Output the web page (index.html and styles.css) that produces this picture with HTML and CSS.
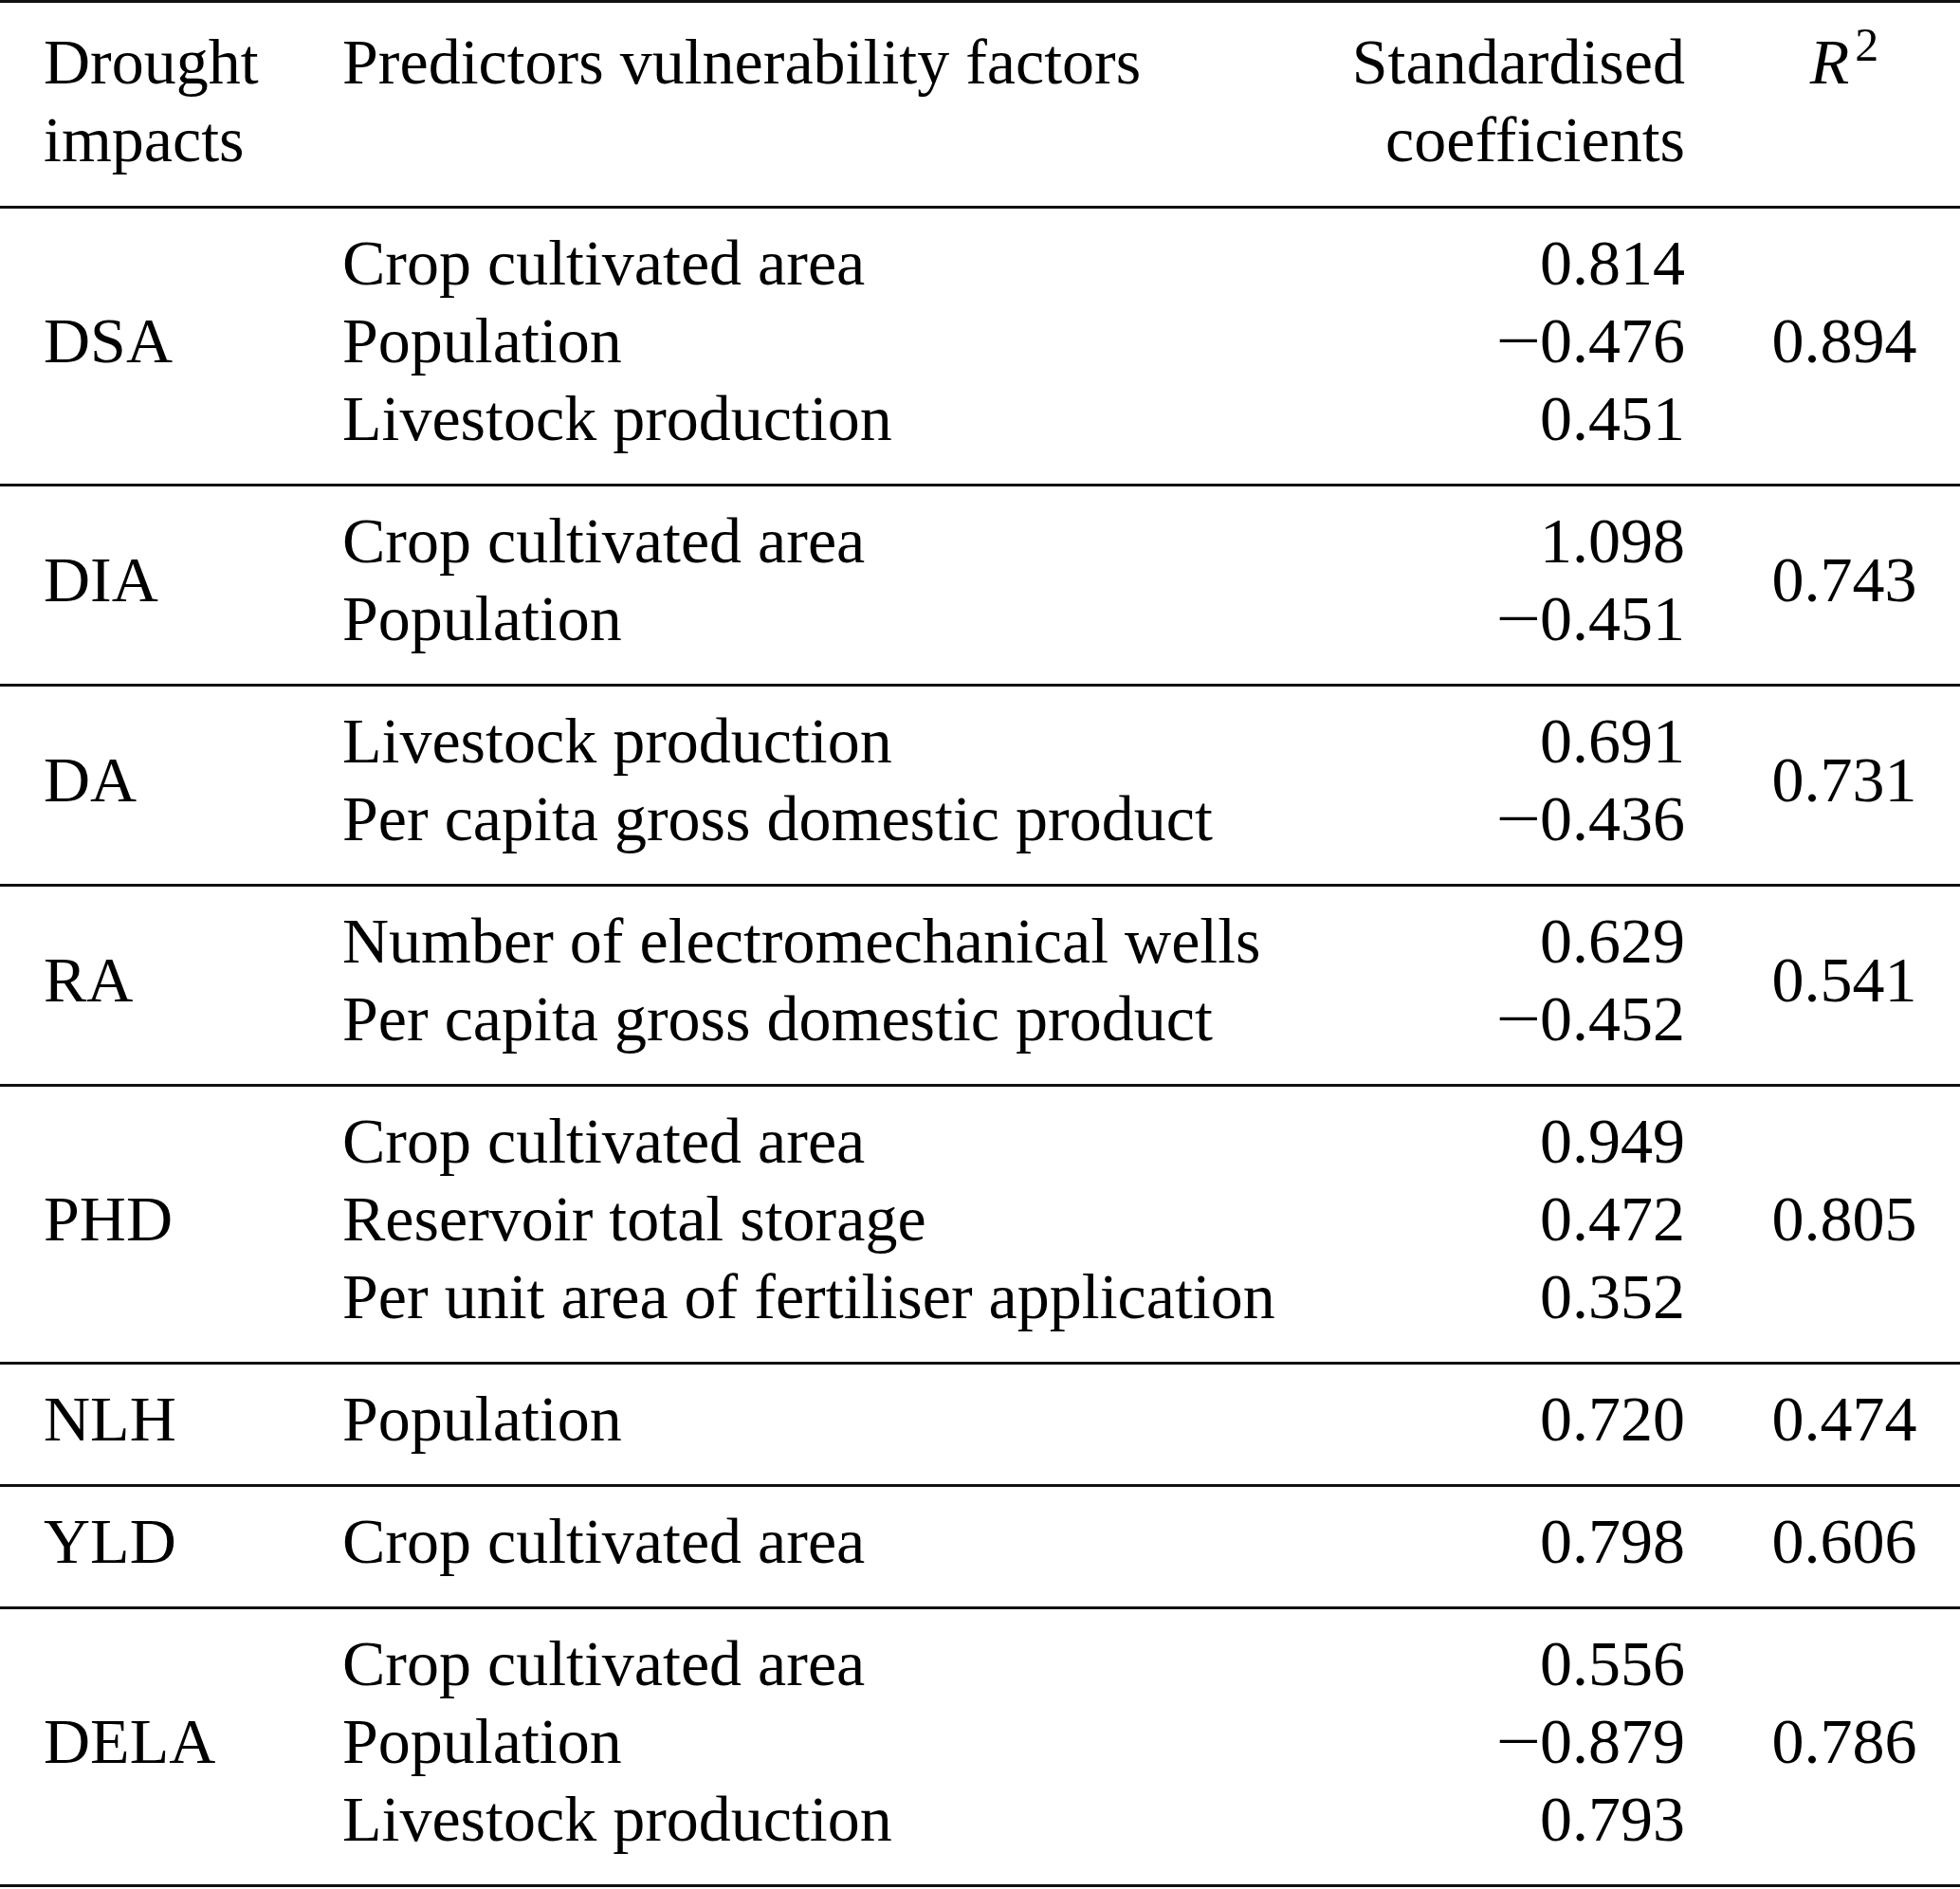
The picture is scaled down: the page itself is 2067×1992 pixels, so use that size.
FILE: index.html
```html
<!DOCTYPE html>
<html lang="en">
<head>
<meta charset="utf-8">
<title>Drought impacts regression</title>
<link rel="stylesheet" href="styles.css">
</head>
<body>
<table class="tbl">
  <colgroup>
    <col class="c-impact">
    <col class="c-pred">
    <col class="c-coef">
    <col class="c-r2">
  </colgroup>
  <thead>
    <tr>
      <th class="impact">Drought<br>impacts</th>
      <th class="pred">Predictors vulnerability factors</th>
      <th class="coef">Standardised<br>coefficients</th>
      <th class="r2"><i class="var">R</i><sup class="exp">2</sup></th>
    </tr>
  </thead>
  <tbody>
    <tr>
      <td class="impact">DSA</td>
      <td class="pred">Crop cultivated area<br>Population<br>Livestock production</td>
      <td class="coef">0.814<br><span class="minus">&minus;</span>0.476<br>0.451</td>
      <td class="r2">0.894</td>
    </tr>
    <tr>
      <td class="impact">DIA</td>
      <td class="pred">Crop cultivated area<br>Population</td>
      <td class="coef">1.098<br><span class="minus">&minus;</span>0.451</td>
      <td class="r2">0.743</td>
    </tr>
    <tr>
      <td class="impact">DA</td>
      <td class="pred">Livestock production<br>Per capita gross domestic product</td>
      <td class="coef">0.691<br><span class="minus">&minus;</span>0.436</td>
      <td class="r2">0.731</td>
    </tr>
    <tr>
      <td class="impact">RA</td>
      <td class="pred">Number of electromechanical wells<br>Per capita gross domestic product</td>
      <td class="coef">0.629<br><span class="minus">&minus;</span>0.452</td>
      <td class="r2">0.541</td>
    </tr>
    <tr>
      <td class="impact">PHD</td>
      <td class="pred">Crop cultivated area<br>Reservoir total storage<br>Per unit area of fertiliser application</td>
      <td class="coef">0.949<br>0.472<br>0.352</td>
      <td class="r2">0.805</td>
    </tr>
    <tr>
      <td class="impact">NLH</td>
      <td class="pred">Population</td>
      <td class="coef">0.720</td>
      <td class="r2">0.474</td>
    </tr>
    <tr>
      <td class="impact">YLD</td>
      <td class="pred">Crop cultivated area</td>
      <td class="coef">0.798</td>
      <td class="r2">0.606</td>
    </tr>
    <tr>
      <td class="impact">DELA</td>
      <td class="pred">Crop cultivated area<br>Population<br>Livestock production</td>
      <td class="coef">0.556<br><span class="minus">&minus;</span>0.879<br>0.793</td>
      <td class="r2">0.786</td>
    </tr>
  </tbody>
</table>
</body>
</html>
```

FILE: styles.css
```css
html, body {
  margin: 0;
  padding: 0;
  background: #ffffff;
}

body {
  color: #000000;
  font-family: "Liberation Serif", "Times New Roman", serif;
  font-size: 68px;
  line-height: 82px;
}

.tbl {
  width: 2067px;
  table-layout: fixed;
  border-collapse: collapse;
  border-top: 3px solid #111111;
}

.c-impact { width: 361px; }
.c-pred { width: 1019px; }
.c-coef { width: 443px; }
.c-r2 { width: 244px; }

.tbl th,
.tbl td {
  font-weight: normal;
  padding: 16px 0 28px 0;
  border-bottom: 3px solid #111111;
  vertical-align: middle;
  white-space: nowrap;
}

.tbl th {
  padding-top: 21px;
  padding-bottom: 29px;
  vertical-align: top;
}

.impact {
  text-align: left;
  padding-left: 46px !important;
}

.pred {
  text-align: left;
}

.coef {
  text-align: right;
  padding-right: 46px !important;
}

.r2 {
  text-align: center;
}

.minus {
  display: inline-block;
  transform: scaleX(1.24);
  margin-right: 4px;
}

.var {
  font-style: italic;
}

.exp {
  font-size: 50px;
  line-height: 0;
  vertical-align: baseline;
  position: relative;
  top: -24px;
  margin-left: 6px;
}
```
